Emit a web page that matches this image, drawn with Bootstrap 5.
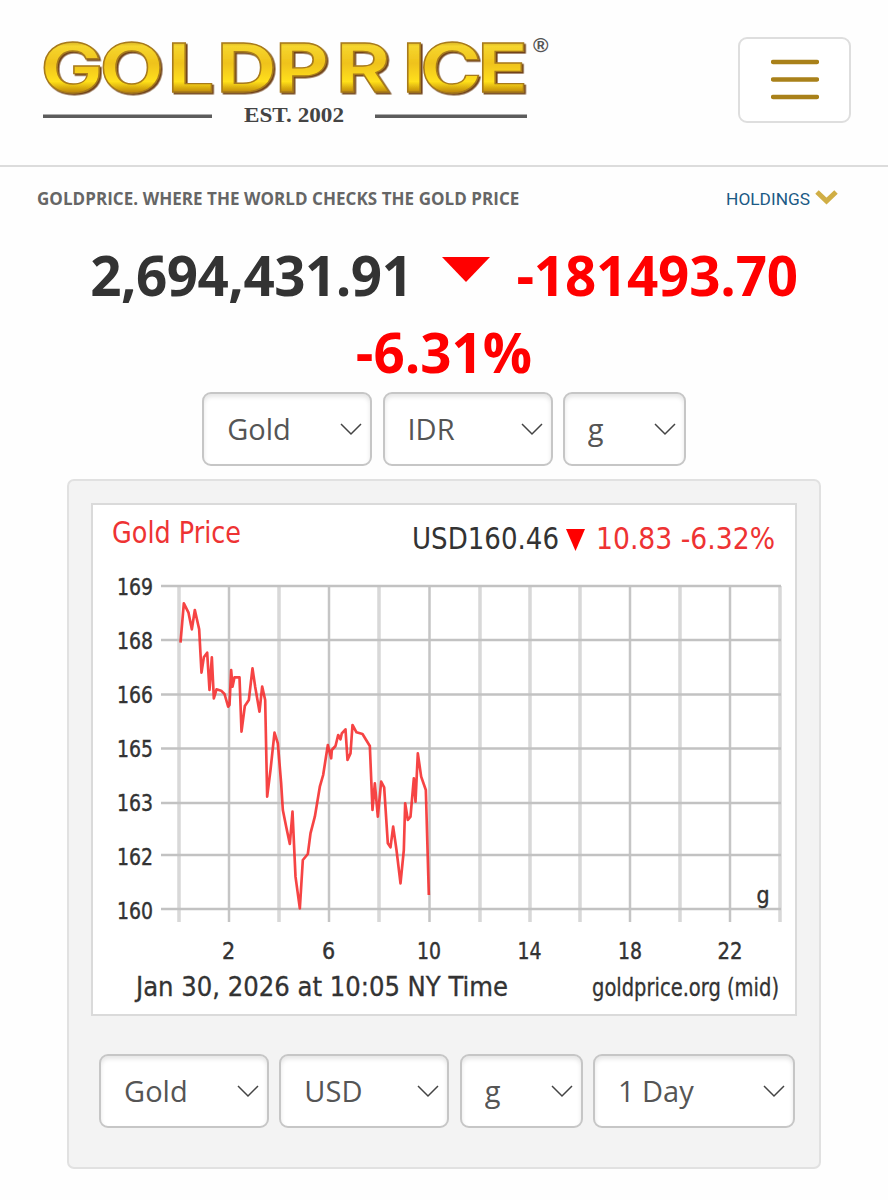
<!DOCTYPE html>
<html lang="en">
<head>
<meta charset="utf-8">
<meta name="viewport" content="width=device-width, initial-scale=1">
<title>Gold Price</title>
<link href="https://cdn.jsdelivr.net/npm/bootstrap@5.3.0/dist/css/bootstrap.min.css" rel="stylesheet">
<style>
body{font-family:"Open Sans",sans-serif;background:#fefefe;color:#333;overflow:hidden}
.site-head{height:167px;border-bottom:2px solid #dcdcdc;padding:30px 37px 0 37px}
.menu-btn{width:113px;height:86px;border:2px solid #dedede;border-radius:9px;margin-top:7px;background:#fff}
.tagline{padding:0 50px 0 37px;height:62px}
.tagline h1{font-size:17px;font-weight:700;color:#666;line-height:24px;white-space:nowrap;letter-spacing:.045px}
.holdings{font-family:Roboto,sans-serif;font-size:17.3px;color:#1b5a85;line-height:24px}
.spot{font-size:54.7px;font-weight:700;line-height:77px;height:163px;padding-top:8px}
.price{letter-spacing:-.5px}
.down{color:#f00}
.change{letter-spacing:-.2px}
.tri{margin:0 26px 0 30px}
.pick{height:74px;border:2px solid #c6c6c6;border-radius:9px;font-size:29px;color:#555;padding:0 10px 0 23px;line-height:70px;box-shadow:inset 0 3px 4px rgba(0,0,0,.1);background-color:#fff;background-image:url("data:image/svg+xml,%3Csvg xmlns='http://www.w3.org/2000/svg' viewBox='0 0 22 14'%3E%3Cpath d='M1 2l10 10L21 2' fill='none' stroke='%23444' stroke-width='1.5'/%3E%3C/svg%3E");background-size:22px 14px;background-position:right 8px center}
.w-a{width:170px}.w-b{width:123px}.w-c{width:202px}
.picks{gap:10.3px}
.chart-card{width:754px;height:690px;margin:13px 0 0 67px;background:#f3f3f3;border:2px solid #e1e1e1;border-radius:7px;padding:22px 22px 0}
.chart-card .picks{margin:38px -3px 0 3px}
.plot{width:706px;height:513px;border:2px solid #dadada;background:#fff;display:block}
.plot text{font-family:"DejaVu Sans Condensed","DejaVu Sans",sans-serif;fill:#333}
</style>
</head>
<body>
<header class="site-head d-flex justify-content-between align-items-start">
<svg width="520" height="100" viewBox="37 30 520 100" role="img" aria-label="Goldprice">
<defs>
<linearGradient id="gold" x1="0" y1="-52" x2="0" y2="0" gradientUnits="userSpaceOnUse"><stop offset="0" stop-color="#c9a227"/><stop offset=".12" stop-color="#f6d62e"/><stop offset=".45" stop-color="#efc21a"/><stop offset=".8" stop-color="#ffe01a"/><stop offset="1" stop-color="#c08a08"/></linearGradient>
<filter id="bevel" x="-5%" y="-10%" width="110%" height="125%"><feDropShadow dx="1.6" dy="1.6" stdDeviation=".7" flood-color="#6b3b08" flood-opacity=".95"/></filter>
</defs>
<g filter="url(#bevel)"><text transform="translate(0 92) scale(1.23 1)" x="33 81 136 176 223.500 273 327 341.500 388" y="0" font-family="Inter,sans-serif" font-weight="700" font-size="68" fill="url(#gold)" stroke="#a77a1c" stroke-width="1.300">GOLDPRICE</text></g>
<text x="533" y="52" font-family="Liberation Sans,sans-serif" font-weight="700" font-size="21" fill="#555">®</text>
<path d="M43 116.300H212M375 116.300H527" stroke="#5c5c5c" stroke-width="3.500"/>
<text x="244" y="122" textLength="100" lengthAdjust="spacingAndGlyphs" font-family="Liberation Serif,serif" font-weight="700" font-size="21" fill="#444">EST. 2002</text>
</svg>
<button class="menu-btn p-0" aria-label="Menu"><svg width="48" height="42" viewBox="0 0 48 42"><path d="M2 3H46M2 20.500H46M2 38H46" stroke="#a9811a" stroke-width="4.300" stroke-linecap="round"/></svg></button>
</header>
<div class="tagline d-flex justify-content-between pt-3">
<h1 class="mt-1 mb-0">GOLDPRICE. WHERE THE WORLD CHECKS THE GOLD PRICE</h1>
<div class="holdings d-flex mt-1">HOLDINGS<svg class="ms-1" width="24" height="20" viewBox="0 0 24 20"><path d="M3 5l9.500 9L22 5" fill="none" stroke="#d0ae45" stroke-width="5"/></svg></div>
</div>
<main>
<div class="spot text-center">
<div class="d-flex justify-content-center align-items-start"><span class="price">2,694,431.91</span><svg class="tri" width="48" height="77" viewBox="0 0 48 77"><path d="M0 20H48L24 45z" fill="#f00"/></svg><span class="down change">-181493.70</span></div>
<div class="down">-6.31%</div>
</div>
<div class="picks d-flex justify-content-center">
<select class="form-select pick w-a" aria-label="Metal"><option>Gold</option></select>
<select class="form-select pick w-a" aria-label="Currency"><option>IDR</option></select>
<select class="form-select pick w-b" aria-label="Unit"><option>g</option></select>
</div>
<section class="chart-card">
<svg class="plot" viewBox="93 505 702 509" preserveAspectRatio="none">
<text x="112" y="543" font-size="30" textLength="129" lengthAdjust="spacingAndGlyphs" style="fill:#e33">Gold Price</text>
<text x="412" y="549" font-size="30" textLength="147" lengthAdjust="spacingAndGlyphs">USD160.46</text>
<path d="M566 529H585L575.500 551z" fill="#f00"/>
<text x="596" y="549" font-size="30" textLength="179" lengthAdjust="spacingAndGlyphs" style="fill:#e33">10.83 -6.32%</text>
<path d="M179 586V922M279 586V922M379 586V922M480 586V922M530 586V922M580 586V922M680 586V922M780 586V922" stroke="#d8d8d8" stroke-width="3.500"/>
<path d="M229 586V922M329 586V922M429.500 586V922M630 586V922M730 586V922" stroke="#c5c5c5" stroke-width="2.500"/>
<path d="M161 586H781M161 640H781M161 694.500H781M161 748.500H781M161 803H781M161 855H781M161 909H781" stroke="#c2c2c2" stroke-width="2.500"/>
<polyline transform="translate(160.500 570) scale(.33333)" fill="none" stroke="#f52a2a" stroke-opacity=".88" stroke-width="8" stroke-linejoin="round" points="60,218 70,100 84,128 94,178 103,120 116,178 123,308 130,262 140,248 147,360 154,262 160,385 168,358 182,362 192,372 203,410 207,405 212,300 216,350 222,322 237,322 243,485 253,408 265,390 276,295 284,350 297,425 305,350 314,390 320,680 330,600 342,488 352,520 362,640 367,720 378,775 388,822 396,725 405,920 418,1015 427,870 442,852 450,790 463,740 478,650 488,615 502,525 512,565 514,540 525,528 533,495 540,508 544,490 555,478 561,570 570,550 576,465 588,487 606,492 628,528 636,720 643,640 652,740 662,635 671,652 682,820 690,832 698,770 708,840 720,940 730,840 734,700 742,750 750,740 760,625 765,695 772,550 782,620 796,660 805,975"/>
<g font-size="23" text-anchor="middle" stroke="#333" stroke-width=".4">
<text x="135" y="595" textLength="36" lengthAdjust="spacingAndGlyphs">169</text><text x="135" y="649" textLength="36" lengthAdjust="spacingAndGlyphs">168</text><text x="135" y="703" textLength="36" lengthAdjust="spacingAndGlyphs">166</text><text x="135" y="757" textLength="36" lengthAdjust="spacingAndGlyphs">165</text><text x="135" y="811" textLength="36" lengthAdjust="spacingAndGlyphs">163</text><text x="135" y="865" textLength="36" lengthAdjust="spacingAndGlyphs">162</text><text x="135" y="919" textLength="36" lengthAdjust="spacingAndGlyphs">160</text>
<text x="228.500" y="959">2</text><text x="328.500" y="959">6</text><text x="429" y="959" textLength="24" lengthAdjust="spacingAndGlyphs">10</text><text x="529.500" y="959" textLength="24" lengthAdjust="spacingAndGlyphs">14</text><text x="630" y="959" textLength="24" lengthAdjust="spacingAndGlyphs">18</text><text x="730" y="959" textLength="25" lengthAdjust="spacingAndGlyphs">22</text>
<text x="763" y="903">g</text>
</g>
<g stroke="#333" stroke-width=".3">
<text x="136" y="996" font-size="26" textLength="372" lengthAdjust="spacingAndGlyphs">Jan 30, 2026 at 10:05 NY Time</text>
<text x="592" y="996" font-size="24" textLength="187" lengthAdjust="spacingAndGlyphs">goldprice.org (mid)</text>
</g>
</svg>
<div class="picks d-flex justify-content-center">
<select class="form-select pick w-a" aria-label="Chart metal"><option>Gold</option></select>
<select class="form-select pick w-a" aria-label="Chart currency"><option>USD</option></select>
<select class="form-select pick w-b" aria-label="Chart unit"><option>g</option></select>
<select class="form-select pick w-c" aria-label="Period"><option>1 Day</option></select>
</div>
</section>
</main>
<script src="https://cdn.jsdelivr.net/npm/bootstrap@5.3.0/dist/js/bootstrap.bundle.min.js"></script>
</body>
</html>
